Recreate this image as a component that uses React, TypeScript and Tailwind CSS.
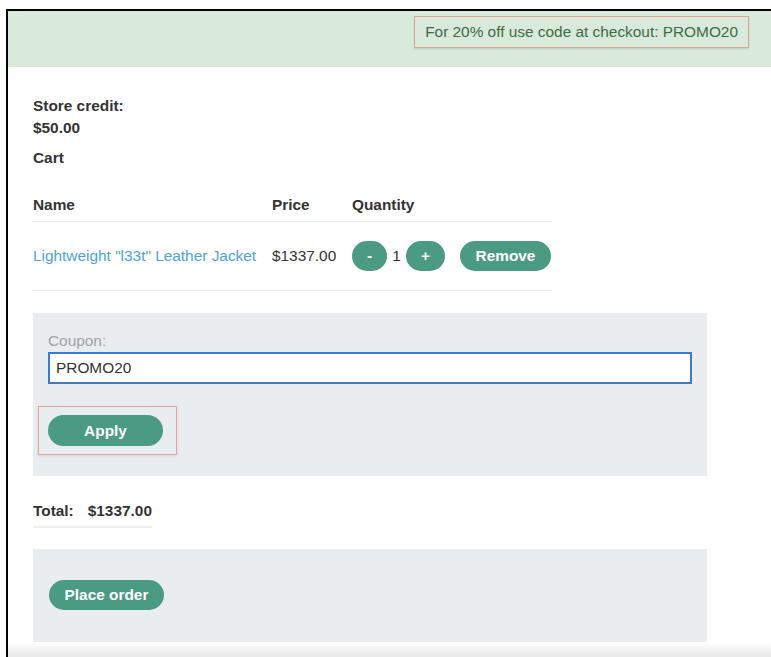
import { useState } from "react";

const font = { fontFamily: '"Liberation Sans", Arial, sans-serif' };

function PillButton({ children, className = "" }: { children: React.ReactNode; className?: string }) {
    return (
        <button
            className={`h-[30px] rounded-full bg-[#4a9b82] text-white font-bold text-[15.4px] leading-none flex items-center justify-center ${className}`}
        >
            {children}
        </button>
    );
}

export default function App() {
    const [coupon, setCoupon] = useState("PROMO20");
    const [qty] = useState(1);

    return (
        <div className="min-h-screen bg-white pt-[9px] pl-[6px] text-[#333] text-[15.4px]" style={font}>
            <div className="border-l-2 border-t-2 border-black">
                {/* Promo banner */}
                <div className="h-[56px] bg-[#d9eadb] flex justify-end items-start pt-[5px] pr-[22px]">
                    <div className="h-[32px] px-[10px] flex items-center border border-[#e3a293] shadow-[0_1px_2px_rgba(0,0,0,0.12)] text-[#3f6b47]">
                        For 20% off use code at checkout: PROMO20
                    </div>
                </div>

                <div className="pl-[25px] pt-[28px]">
                    <div className="font-bold leading-[22px]">
                        <div>Store credit:</div>
                        <div>$50.00</div>
                    </div>
                    <div className="font-bold leading-[22px] mt-[8px]">Cart</div>

                    {/* Cart table */}
                    <div className="w-[518px] mt-[25px]">
                        <div className="flex font-bold leading-[22px] pb-[5px] border-b border-[#ececec]">
                            <div className="w-[239px]">Name</div>
                            <div className="w-[80px]">Price</div>
                            <div>Quantity</div>
                        </div>
                        <div className="flex items-center py-[19px] border-b border-[#ececec]">
                            <a href="#" className="w-[239px] text-[#4ea3dc]">
                                Lightweight "l33t" Leather Jacket
                            </a>
                            <div className="w-[80px]">$1337.00</div>
                            <div className="flex items-center w-[108px]">
                                <PillButton className="w-[35px]">-</PillButton>
                                <span className="w-[19px] text-center">{qty}</span>
                                <PillButton className="w-[39px]">+</PillButton>
                            </div>
                            <PillButton className="w-[91px]">Remove</PillButton>
                        </div>
                    </div>

                    {/* Coupon */}
                    <div className="w-[674px] mt-[22px] bg-[#e9edf0] px-[15px] pt-[18px] pb-[21px]">
                        <div className="text-[#a3a3a3] leading-[20px]">Coupon:</div>
                        <input
                            value={coupon}
                            onChange={e => setCoupon(e.target.value)}
                            className="mt-[1px] w-full h-[32px] bg-white border-2 border-[#3d7ac8] px-[6px] text-[15.4px] text-[#333] outline-none"
                        />
                        <div className="mt-[22px] -ml-[10px] inline-flex border border-[#e6a598] pt-[8px] pb-[8px] pl-[9px] pr-[13px] shadow-[0_1px_3px_rgba(0,0,0,0.1)]">
                            <PillButton className="w-[115px] h-[31px]">Apply</PillButton>
                        </div>
                    </div>

                    {/* Total */}
                    <div className="mt-[24px] inline-flex gap-[14px] font-bold leading-[22px] pb-[4px] border-b-2 border-[#f0f0f0]">
                        <span>Total:</span>
                        <span>$1337.00</span>
                    </div>

                    <div className="w-[674px] mt-[21px] bg-[#e9edf0] px-[16px] pt-[31px] pb-[32px]">
                        <PillButton className="w-[115px]">Place order</PillButton>
                    </div>
                </div>
                <div className="h-[15px] bg-gradient-to-b from-white to-[#e9e9e9]" />
            </div>
        </div>
    );
}
